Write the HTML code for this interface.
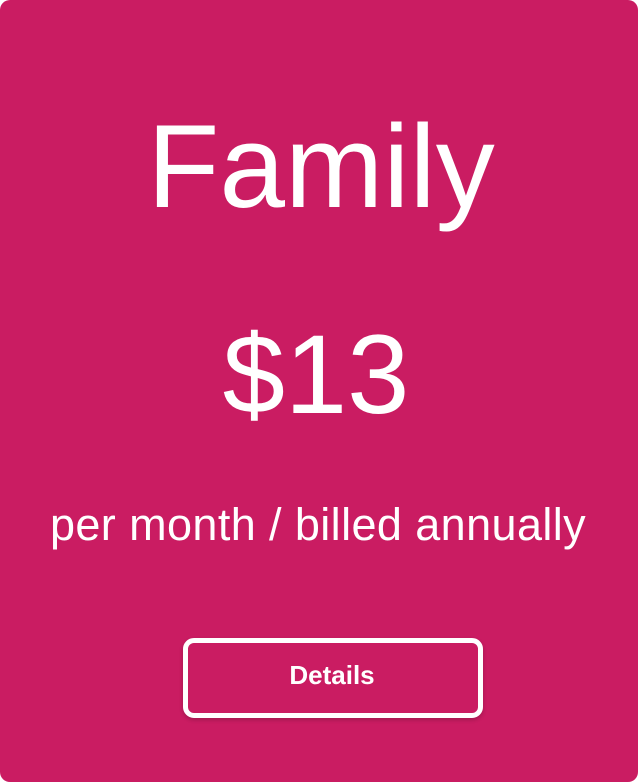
<!DOCTYPE html>
<html><head><meta charset="utf-8"><style>
html,body{margin:0;padding:0;background:#fff;}
.card{position:absolute;left:0;top:0;width:638px;height:782px;background:#ca1c62;border-radius:10px;font-family:"Liberation Sans",sans-serif;color:#fff;}
.t{position:absolute;left:0;width:638px;text-align:center;white-space:nowrap;line-height:1;}
.btn{position:absolute;left:183px;top:638px;width:290px;height:70px;border:5px solid #fff;border-radius:11px;box-shadow:0 2px 4px rgba(0,0,0,0.2);}
</style></head><body>
<div class="card">
<div class="t" style="top:108px;left:2px;font-size:118px;letter-spacing:0px;">Family</div>
<div class="t" style="top:319px;left:-3px;font-size:112px;">$13</div>
<div class="t" style="top:502px;left:-1px;font-size:45px;letter-spacing:0.4px;">per month / billed annually</div>
<div class="btn"></div>
<div class="t" style="top:662px;left:13px;font-size:26px;font-weight:bold;">Details</div>
</div>
</body></html>
